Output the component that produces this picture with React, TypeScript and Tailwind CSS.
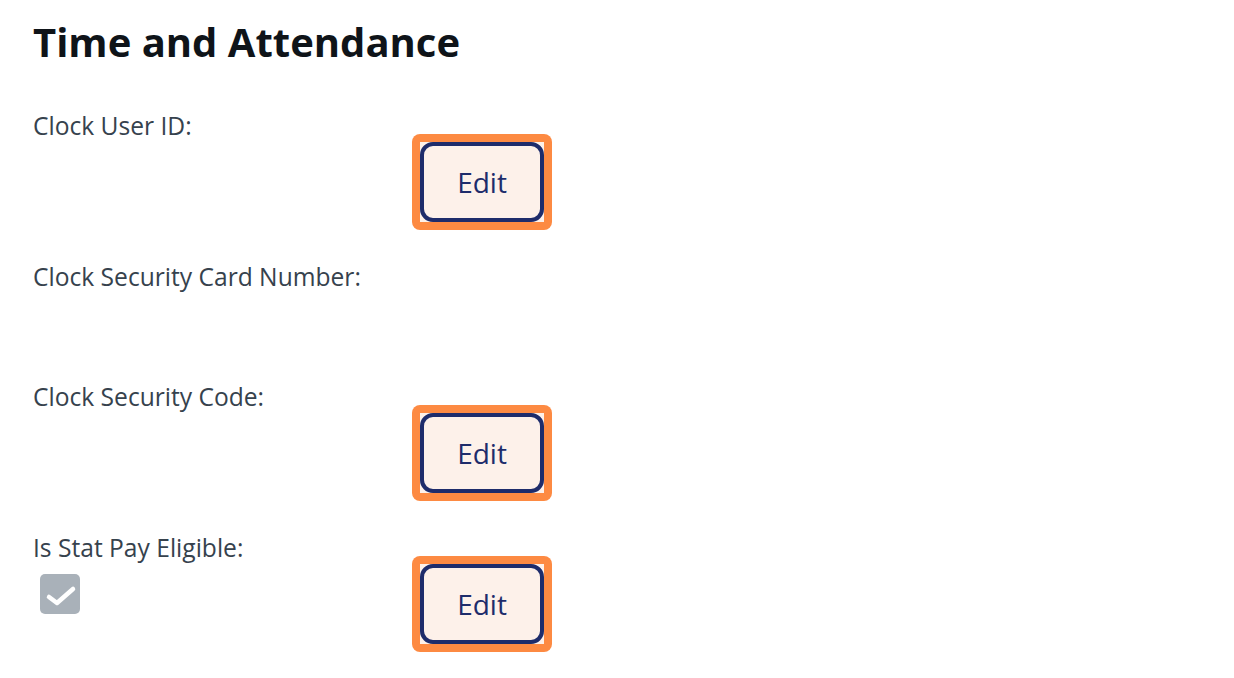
const font = { fontFamily: '"Open Sans", "Noto Sans", sans-serif' };

function EditButton() {
  return (
    <div className="w-fit rounded-[8px] bg-[#fd8a42] p-[8px]">
      <div className="bg-[#fdf1ea]">
        <button className="flex h-[80px] w-[124px] items-center justify-center rounded-[13px] border-[4px] border-[#1e2c6b] bg-[#fdf1ea] text-[28px] text-[#1e2c6b]">
          Edit
        </button>
      </div>
    </div>
  );
}

function Label({ children }: { children: React.ReactNode }) {
  return <div className="text-[24.6px] leading-[28px] text-[#36424d]">{children}</div>;
}

export default function App() {
  return (
    <div className="min-h-screen bg-white pl-[33px] pt-[17px]" style={font}>
      <h1 className="text-[40px] font-bold leading-[50px] text-[#0f1419]">Time and Attendance</h1>

      <div className="mt-[45px] flex flex-col">
        <div className="mb-[33px]">
          <Label>Clock User ID:</Label>
          <div className="-mt-[6px] pl-[379px]">
            <EditButton />
          </div>
        </div>

        <div className="mb-[33px]">
          <Label>Clock Security Card Number:</Label>
          <div className="h-[59px]" />
        </div>

        <div className="mb-[33px]">
          <Label>Clock Security Code:</Label>
          <div className="-mt-[6px] pl-[379px]">
            <EditButton />
          </div>
        </div>

        <div>
          <Label>Is Stat Pay Eligible:</Label>
          <div className="-mt-[6px] flex items-start">
            <div className="ml-[7px] mt-[18px] flex h-[40px] w-[40px] items-center justify-center rounded-[5px] bg-[#a9b1b9]">
              <svg width="40" height="40" viewBox="0 0 40 40" fill="none">
                <path d="M9 31l8 6L33 23" transform="translate(0 -8)" stroke="white" strokeWidth="4.5" strokeLinecap="round" strokeLinejoin="round" />
              </svg>
            </div>
            <div className="ml-[332px]">
              <EditButton />
            </div>
          </div>
        </div>
      </div>
    </div>
  );
}
